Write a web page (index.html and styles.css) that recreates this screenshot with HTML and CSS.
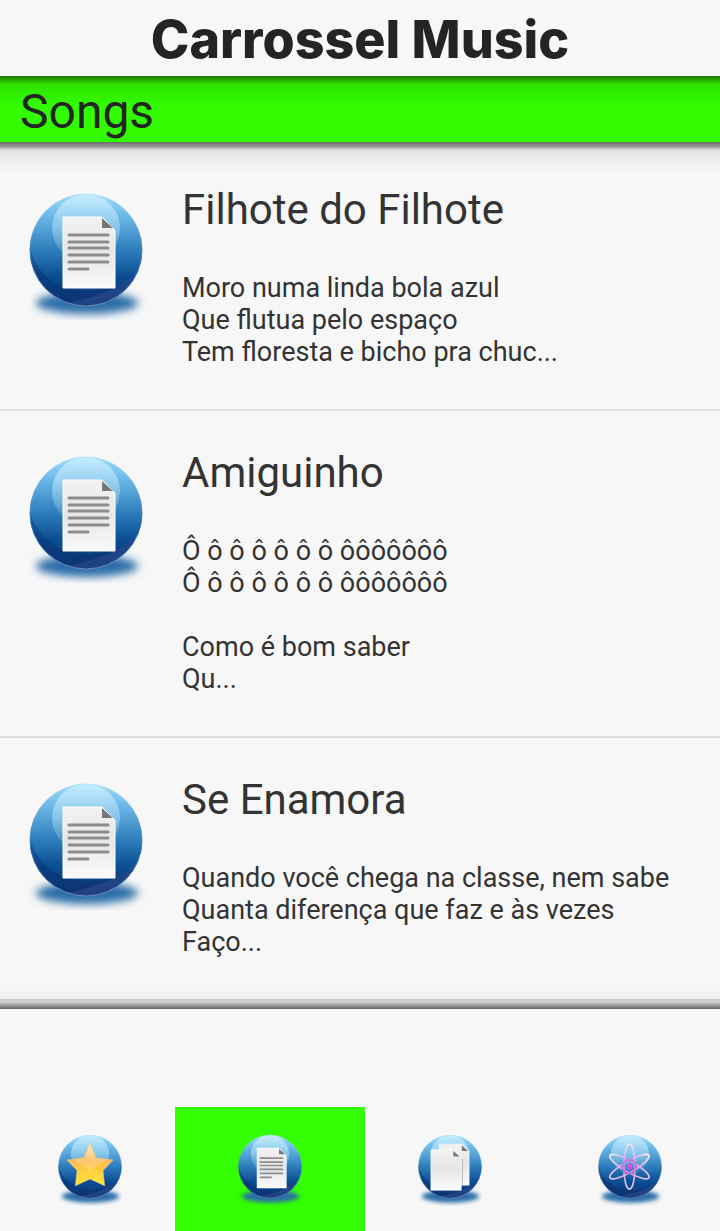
FILE: index.html
```
<!DOCTYPE html>
<html lang="pt-BR">
<head>
    <meta charset="UTF-8">
    <meta name="viewport" content="width=device-width, initial-scale=1.0">
    <title>Carrossel Music</title>
    <link rel="stylesheet" href="styles.css">
</head>
<body>
    <!-- Shared icon shapes -->
    <svg class="icon-defs" aria-hidden="true">
        <defs>
            <linearGradient id="ball-fill" x1="0" y1="0" x2="0" y2="1">
                <stop offset="0" stop-color="#9bdcfb"/>
                <stop offset="0.2" stop-color="#6ab8e8"/>
                <stop offset="0.5" stop-color="#2d7dbb"/>
                <stop offset="0.75" stop-color="#094b90"/>
                <stop offset="1" stop-color="#123a7c"/>
            </linearGradient>
            <linearGradient id="shine-fill" x1="0" y1="0" x2="0" y2="1">
                <stop offset="0" stop-color="#d8f3ff" stop-opacity="0.7"/>
                <stop offset="0.5" stop-color="#b5e2f8" stop-opacity="0.5"/>
                <stop offset="1" stop-color="#8fd0f0" stop-opacity="0.1"/>
            </linearGradient>
            <linearGradient id="edge-fill" x1="0" y1="0" x2="0" y2="1">
                <stop offset="0" stop-color="#b5e4fb"/>
                <stop offset="0.6" stop-color="#2a6cab"/>
                <stop offset="1" stop-color="#6d8fbd"/>
            </linearGradient>
            <linearGradient id="paper-fill" x1="0" y1="0" x2="0" y2="1">
                <stop offset="0" stop-color="#f2f2f2"/>
                <stop offset="0.5" stop-color="#e6e6e6"/>
                <stop offset="1" stop-color="#fafafa"/>
            </linearGradient>
            <linearGradient id="star-fill" x1="0" y1="0" x2="0" y2="1">
                <stop offset="0" stop-color="#fff3a8"/>
                <stop offset="0.4" stop-color="#ffb759"/>
                <stop offset="0.6" stop-color="#ffcb3e"/>
                <stop offset="1" stop-color="#ffe53b"/>
            </linearGradient>
            <linearGradient id="atom-line" gradientUnits="userSpaceOnUse" x1="0" y1="18" x2="0" y2="98">
                <stop offset="0" stop-color="#f6eafa"/>
                <stop offset="0.45" stop-color="#cf8fe4"/>
                <stop offset="1" stop-color="#e6c9f2"/>
            </linearGradient>
            <filter id="soft" x="-20%" y="-60%" width="140%" height="220%">
                <feGaussianBlur stdDeviation="4"/>
            </filter>
            <clipPath id="ball-clip">
                <circle cx="64" cy="58" r="56"/>
            </clipPath>
            <symbol id="ball" viewBox="0 0 128 128">
                <ellipse cx="65" cy="111" rx="51" ry="11" fill="#2a6da8" filter="url(#soft)"/>
                <circle cx="64" cy="58" r="56" fill="url(#ball-fill)"/>
                <g clip-path="url(#ball-clip)">
                    <path d="M8 56C20 108 90 110 120 76V120H8Z" fill="#06205c" opacity="0.3"/>
                    <path d="M40 112C70 106 100 98 120 74V116Z" fill="#5b6cad" opacity="0.25"/>
                </g>
                <circle cx="64" cy="36" r="34" fill="url(#shine-fill)"/>
                <circle cx="64" cy="58" r="56" fill="none" stroke="url(#edge-fill)" stroke-width="1"/>
            </symbol>
            <symbol id="icon-song" viewBox="0 0 128 128">
                <use href="#ball"/>
                <path d="M41 25H80L93 38V96H41Z" fill="url(#paper-fill)" stroke="#fff" stroke-width="1"/>
                <path d="M80 26V36H91Z" fill="#777"/>
                <path d="M47 43H86M47 50H86M47 56H86M47 63H86M47 70H86M47 77H66" stroke="#8c8c8c" stroke-width="3" stroke-linecap="round"/>
            </symbol>
            <symbol id="icon-star" viewBox="0 0 128 128">
                <use href="#ball"/>
                <path d="M64 16L75 42L105 46L87 65L90 92L64 80L38 92L41 65L23 46L53 42Z" fill="url(#star-fill)" stroke="#e8c98a" stroke-width="1"/>
                <path d="M64 19L74 43L101 47C84 49 73 55 64 67C56 58 45 50 28 47L54 43Z" fill="#fff" opacity="0.2"/>
            </symbol>
            <symbol id="icon-pages" viewBox="0 0 128 128">
                <use href="#ball"/>
                <path d="M45 18H86L98 30V91H45Z" fill="url(#paper-fill)" stroke="#fff" stroke-width="1"/>
                <path d="M85 20V30H96Z" fill="#777"/>
                <path d="M86 91V44" fill="none" stroke="#b4bac0" stroke-width="2"/>
                <path d="M30 28H71L84 41V100H30Z" fill="url(#paper-fill)" stroke="#fff" stroke-width="1"/>
                <path d="M70 30V40H81Z" fill="#777"/>
            </symbol>
            <symbol id="icon-atom" viewBox="0 0 128 128">
                <use href="#ball"/>
                <g fill="none" stroke="url(#atom-line)" stroke-width="3">
                    <ellipse cx="63" cy="58" rx="10" ry="40"/>
                    <ellipse cx="63" cy="58" rx="10" ry="40" transform="rotate(60 63 58)"/>
                    <ellipse cx="63" cy="58" rx="10" ry="40" transform="rotate(-60 63 58)"/>
                </g>
                <circle cx="63" cy="58" r="12" fill="none" stroke="#bd68dc" stroke-width="2"/>
                <circle cx="63" cy="58" r="5" fill="#d44ee6"/>
            </symbol>
        </defs>
    </svg>

    <header>
        <h1>Carrossel Music</h1>
    </header>

    <div class="section-bar">
        <h2>Songs</h2>
    </div>

    <!-- Song list -->
    <main class="song-list">
        <a class="song" href="#filhote">
            <svg class="song-icon" aria-hidden="true"><use href="#icon-song"/></svg>
            <div class="song-text">
                <h3>Filhote do Filhote</h3>
                <p>Moro numa linda bola azul<br>Que flutua pelo espaço<br>Tem floresta e bicho pra chuc...</p>
            </div>
        </a>
        <a class="song" href="#amiguinho">
            <svg class="song-icon" aria-hidden="true"><use href="#icon-song"/></svg>
            <div class="song-text">
                <h3>Amiguinho</h3>
                <p>Ô ô ô ô ô ô ô ôôôôôôô<br>Ô ô ô ô ô ô ô ôôôôôôô<br><br>Como é bom saber<br>Qu...</p>
            </div>
        </a>
        <a class="song" href="#enamora">
            <svg class="song-icon" aria-hidden="true"><use href="#icon-song"/></svg>
            <div class="song-text">
                <h3>Se Enamora</h3>
                <p>Quando você chega na classe, nem sabe<br>Quanta diferença que faz e às vezes<br>Faço...</p>
            </div>
        </a>
    </main>

    <!-- Bottom tabs -->
    <nav class="tabs">
        <a class="tab" href="#favorites" aria-label="Favorites"><svg aria-hidden="true"><use href="#icon-star"/></svg></a>
        <a class="tab active" href="#songs" aria-label="Songs"><svg aria-hidden="true"><use href="#icon-song"/></svg></a>
        <a class="tab" href="#albums" aria-label="Albums"><svg aria-hidden="true"><use href="#icon-pages"/></svg></a>
        <a class="tab" href="#about" aria-label="About"><svg aria-hidden="true"><use href="#icon-atom"/></svg></a>
    </nav>
</body>
</html>
```
FILE: styles.css
```
body {
    margin: 0;
    background-color: #f7f7f7;
    color: #333;
    font-family: Roboto, sans-serif;
    display: flex;
    flex-direction: column;
    min-height: 100vh;
}

h1, h2, h3, p {
    margin: 0;
    font-weight: normal;
}

.icon-defs {
    position: absolute;
    width: 0;
    height: 0;
}

/* App title */
header {
    padding: 10px 0 6px;
    text-align: center;
    color: #222426;
}

h1 {
    font-family: Inter, sans-serif;
    font-size: 52px;
    line-height: 60px;
    font-weight: 800;
}

/* Green bar with the section name */
.section-bar {
    padding: 8px 20px 2px;
    background: linear-gradient(#1a7000, #2bc800 6px, #2fe400 9px, #33fc00 30px);
    color: #222426;
}

.section-bar h2 {
    font-size: 48px;
    line-height: 56px;
}

/* Song list, shaded on its top and bottom edges */
.song-list {
    padding: 6px 0 8px;
    background:
        linear-gradient(#6c6c6c, #999 5px, #ccc 7px, #e4e4e4 9px, #f7f7f7) top / 100% 30px no-repeat,
        linear-gradient(#ddd, #666) bottom / 100% 8px no-repeat,
        linear-gradient(#f7f7f7, #e4e4e4) bottom / 100% 20px no-repeat;
}

.song {
    display: flex;
    gap: 32px;
    padding: 37px 22px 41px;
    border-bottom: 2px solid #ddd;
    color: inherit;
    text-decoration: none;
}

.song:last-child {
    border-color: #c9c9c9;
}

.song-icon {
    flex: none;
    width: 128px;
    height: 128px;
    margin-top: 7px;
}

.song-text {
    min-width: 0;
}

.song h3 {
    font-size: 42px;
    line-height: 50px;
}

.song p {
    margin-top: 37px;
    font-size: 27px;
    line-height: 32px;
}

/* Bottom tabs */
.tabs {
    display: grid;
    grid-template-columns: repeat(4, 1fr);
    margin-top: auto;
}

.tab {
    display: flex;
    justify-content: center;
    padding: 27px 0 25px;
}

.tab.active {
    margin: 0 -5px;
    background-color: #33ff00;
}

.tab svg {
    width: 72px;
    height: 72px;
}
```
